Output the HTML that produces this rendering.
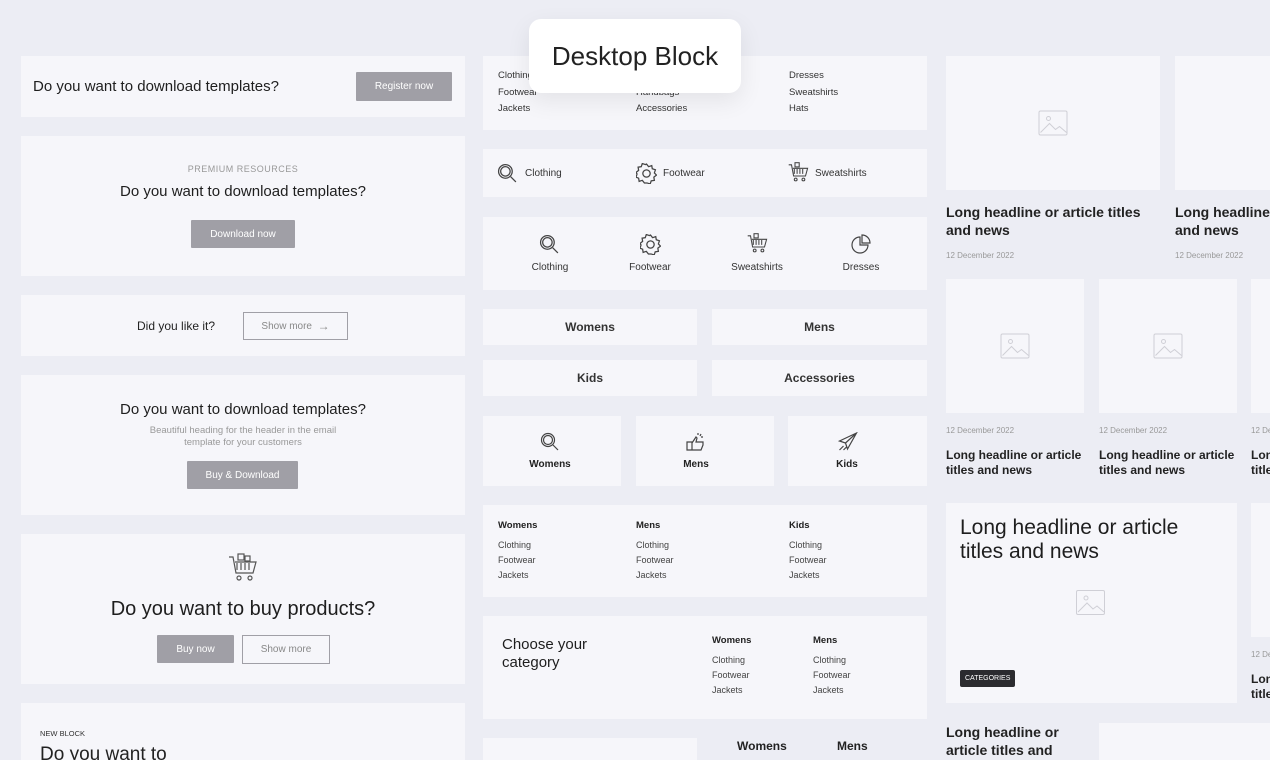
<!DOCTYPE html><html><head><style>
*{margin:0;padding:0;box-sizing:border-box}
html,body{width:1270px;height:760px;overflow:hidden}
body{background:#ecedf4;font-family:"Liberation Sans",sans-serif;color:#222}
#w{position:relative;width:1270px;height:760px;overflow:hidden}
.c{position:absolute;background:#f6f6fa}
.a{position:absolute;white-space:nowrap}
.btn{position:absolute;background:#a09fa6;color:#fff;font-size:10px;display:flex;align-items:center;justify-content:center;border-radius:1px}
.ob{position:absolute;border:1px solid #a09fa6;color:#888;font-size:10px;display:flex;align-items:center;justify-content:center;background:#f6f6fa}
.s{font-size:9.5px;color:#333;line-height:16.5px}
.s2{font-size:9px;color:#444;line-height:15px}
.b{font-weight:bold;font-size:10px}
.t{font-size:11px;color:#333}
.img svg{position:absolute;left:50%;top:50%;transform:translate(-50%,-50%)}
.h{font-size:14px;font-weight:bold;color:#222;line-height:18px}
.d{font-size:8px;color:#999}
.h2{font-size:12px;font-weight:bold;line-height:15px;color:#222}
.m{font-weight:500;color:#1e1e1e}
</style></head><body><div id="w">
<!-- left column -->
<div class="c" style="left:21px;top:56px;width:444px;height:61px"></div>
<div class="a m" style="left:33px;top:78px;font-size:15px">Do you want to download templates?</div>
<div class="btn" style="left:356px;top:72px;width:96px;height:29px">Register now</div>

<div class="c" style="left:21px;top:136px;width:444px;height:140px"></div>
<div class="a" style="left:21px;width:444px;text-align:center;top:164px;font-size:9px;color:#999;letter-spacing:.5px">PREMIUM RESOURCES</div>
<div class="a m" style="left:21px;width:444px;text-align:center;top:183px;font-size:15px">Do you want to download templates?</div>
<div class="btn" style="left:191px;top:220px;width:104px;height:28px">Download now</div>

<div class="c" style="left:21px;top:295px;width:444px;height:61px"></div>
<div class="a" style="left:137px;top:319px;font-size:12px">Did you like it?</div>
<div class="ob" style="left:243px;top:312px;width:105px;height:28px">Show more &nbsp;<span style="font-size:12px">→</span></div>

<div class="c" style="left:21px;top:375px;width:444px;height:140px"></div>
<div class="a m" style="left:21px;width:444px;text-align:center;top:401px;font-size:15px">Do you want to download templates?</div>
<div class="a" style="left:21px;width:444px;text-align:center;top:425px;font-size:9.5px;color:#999;line-height:12px;white-space:normal;padding:0 120px">Beautiful heading for the header in the email template for your customers</div>
<div class="btn" style="left:187px;top:461px;width:111px;height:28px">Buy &amp; Download</div>

<div class="c" style="left:21px;top:534px;width:444px;height:150px"></div>
<svg class="a" style="left:228px;top:553px" width="30" height="30" viewBox="0 0 30 30" fill="none" stroke="#555" stroke-width="1.2"><path d="M1 4h4l3 16h17l3-11H7M9 10v7M13 10v7M17 10v7M21 10v7"/><circle cx="11" cy="25" r="2"/><circle cx="22" cy="25" r="2"/><rect x="10" y="1" width="6" height="6"/><rect x="17" y="3" width="5" height="5"/></svg>
<div class="a m" style="left:21px;width:444px;text-align:center;top:598px;font-size:20px">Do you want to buy products?</div>
<div class="btn" style="left:157px;top:635px;width:77px;height:28px">Buy now</div>
<div class="ob" style="left:242px;top:635px;width:88px;height:29px">Show more</div>

<div class="c" style="left:21px;top:703px;width:444px;height:60px"></div>
<div class="a" style="left:40px;top:729px;font-size:7.5px;color:#333">NEW BLOCK</div>
<div class="a" style="left:40px;top:744px;font-size:19px">Do you want to</div>

<!-- middle -->
<div class="c" style="left:483px;top:56px;width:444px;height:74px"></div>
<div class="a s" style="left:498px;top:68px">Clothing<br>Footwear<br>Jackets</div>
<div class="a s" style="left:636px;top:68px">Dresses<br>Handbags<br>Accessories</div>
<div class="a s" style="left:789px;top:68px">Dresses<br>Sweatshirts<br>Hats</div>

<div class="c" style="left:483px;top:149px;width:444px;height:48px"></div>
<svg class="a" style="left:497px;top:163px" width="21" height="21" viewBox="0 0 20 20" fill="none" stroke="#444" stroke-width="1.2"><circle cx="8" cy="8" r="6.5"/><circle cx="8" cy="8" r="4.5"/><path d="M13 13l5 5"/></svg>
<div class="a t" style="left:525px;top:168px;font-size:10px">Clothing</div>
<svg class="a" style="left:636px;top:163px" width="21" height="21" viewBox="0 0 20 20" fill="none" stroke="#444" stroke-width="1.2"><path d="M10 1l2 2.5 3-1 .5 3 3 1-1 3 2 2-2.5 2 .5 3-3 .5-1 3-3-1L8 19l-2-2.5-3 1-.5-3-2.5-1 1-3L0 9l2.5-2L2 4l3-.5 1-3 3 1z"/><circle cx="10" cy="10" r="3.5"/></svg>
<div class="a t" style="left:663px;top:168px;font-size:10px">Footwear</div>
<svg class="a" style="left:788px;top:162px" width="21" height="21" viewBox="0 0 30 30" fill="none" stroke="#444" stroke-width="1.5"><path d="M1 4h4l3 16h17l3-11H7M9 10v7M13 10v7M17 10v7M21 10v7"/><circle cx="11" cy="25" r="2"/><circle cx="22" cy="25" r="2"/><rect x="10" y="1" width="6" height="6"/></svg>
<div class="a t" style="left:815px;top:168px;font-size:10px">Sweatshirts</div>

<div class="c" style="left:483px;top:217px;width:444px;height:73px"></div>
<svg class="a" style="left:539px;top:234px" width="21" height="21" viewBox="0 0 20 20" fill="none" stroke="#444" stroke-width="1.2"><circle cx="8" cy="8" r="6.5"/><circle cx="8" cy="8" r="4.5"/><path d="M13 13l5 5"/></svg>
<div class="a t" style="left:500px;width:100px;text-align:center;top:262px;font-size:10px">Clothing</div>
<svg class="a" style="left:640px;top:234px" width="21" height="21" viewBox="0 0 20 20" fill="none" stroke="#444" stroke-width="1.2"><path d="M10 1l2 2.5 3-1 .5 3 3 1-1 3 2 2-2.5 2 .5 3-3 .5-1 3-3-1L8 19l-2-2.5-3 1-.5-3-2.5-1 1-3L0 9l2.5-2L2 4l3-.5 1-3 3 1z"/><circle cx="10" cy="10" r="3.5"/></svg>
<div class="a t" style="left:600px;width:100px;text-align:center;top:262px;font-size:10px">Footwear</div>
<svg class="a" style="left:747px;top:233px" width="21" height="21" viewBox="0 0 30 30" fill="none" stroke="#444" stroke-width="1.5"><path d="M1 4h4l3 16h17l3-11H7M9 10v7M13 10v7M17 10v7M21 10v7"/><circle cx="11" cy="25" r="2"/><circle cx="22" cy="25" r="2"/><rect x="10" y="1" width="6" height="6"/></svg>
<div class="a t" style="left:707px;width:100px;text-align:center;top:262px;font-size:10px">Sweatshirts</div>
<svg class="a" style="left:851px;top:234px" width="20" height="20" viewBox="0 0 20 20" fill="none" stroke="#444" stroke-width="1.2"><path d="M9 3a8 8 0 1 0 8 8H9z"/><path d="M11 1a8 8 0 0 1 8 8h-8z"/></svg>
<div class="a t" style="left:811px;width:100px;text-align:center;top:262px;font-size:10px">Dresses</div>

<div class="c" style="left:483px;top:309px;width:214px;height:36px"></div>
<div class="a" style="left:483px;width:214px;text-align:center;top:320px;font-size:12px;font-weight:bold;color:#333">Womens</div>
<div class="c" style="left:712px;top:309px;width:215px;height:36px"></div>
<div class="a" style="left:712px;width:215px;text-align:center;top:320px;font-size:12px;font-weight:bold;color:#333">Mens</div>
<div class="c" style="left:483px;top:360px;width:214px;height:36px"></div>
<div class="a" style="left:483px;width:214px;text-align:center;top:371px;font-size:12px;font-weight:bold;color:#333">Kids</div>
<div class="c" style="left:712px;top:360px;width:215px;height:36px"></div>
<div class="a" style="left:712px;width:215px;text-align:center;top:371px;font-size:12px;font-weight:bold;color:#333">Accessories</div>

<div class="c" style="left:483px;top:416px;width:138px;height:70px"></div>
<svg class="a" style="left:540px;top:432px" width="20" height="20" viewBox="0 0 20 20" fill="none" stroke="#444" stroke-width="1.2"><circle cx="8" cy="8" r="6.5"/><circle cx="8" cy="8" r="4.5"/><path d="M13 13l5 5"/></svg>
<div class="a b" style="left:483px;width:134px;text-align:center;top:459px">Womens</div>
<div class="c" style="left:636px;top:416px;width:138px;height:70px"></div>
<svg class="a" style="left:686px;top:432px" width="20" height="20" viewBox="0 0 20 20" fill="none" stroke="#444" stroke-width="1.2"><path d="M1 10h5v8H1zM6 11l4-6 1 1-1 4h7v3l-2 5H6M12 1v2M15 2l-1 2M17 5h-2"/></svg>
<div class="a b" style="left:636px;width:120px;text-align:center;top:459px">Mens</div>
<div class="c" style="left:788px;top:416px;width:139px;height:70px"></div>
<svg class="a" style="left:837px;top:432px" width="21" height="20" viewBox="0 0 20 20" fill="none" stroke="#444" stroke-width="1.2"><path d="M19 1L2 9l6 2 2 6zM19 1L8 11M6 14l-4 4M9 15l-3 3"/></svg>
<div class="a b" style="left:788px;width:118px;text-align:center;top:459px">Kids</div>

<div class="c" style="left:483px;top:505px;width:444px;height:92px"></div>
<div class="a b" style="left:498px;top:520px;font-size:9.5px">Womens</div>
<div class="a s2" style="left:498px;top:538px">Clothing<br>Footwear<br>Jackets</div>
<div class="a b" style="left:636px;top:520px;font-size:9.5px">Mens</div>
<div class="a s2" style="left:636px;top:538px">Clothing<br>Footwear<br>Jackets</div>
<div class="a b" style="left:789px;top:520px;font-size:9.5px">Kids</div>
<div class="a s2" style="left:789px;top:538px">Clothing<br>Footwear<br>Jackets</div>

<div class="c" style="left:483px;top:616px;width:444px;height:103px"></div>
<div class="a m" style="left:502px;top:636px;font-size:15px;line-height:18px">Choose your<br>category</div>
<div class="a b" style="left:712px;top:635px;font-size:9.5px">Womens</div>
<div class="a s2" style="left:712px;top:653px">Clothing<br>Footwear<br>Jackets</div>
<div class="a b" style="left:813px;top:635px;font-size:9.5px">Mens</div>
<div class="a s2" style="left:813px;top:653px">Clothing<br>Footwear<br>Jackets</div>

<div class="c" style="left:483px;top:738px;width:214px;height:22px"></div>
<div class="a" style="left:737px;top:739px;font-size:12px;font-weight:bold">Womens</div>
<div class="a" style="left:837px;top:739px;font-size:12px;font-weight:bold">Mens</div>

<!-- right -->
<svg width="0" height="0" style="position:absolute"><defs><g id="im" fill="none" stroke="#cfcfd6" stroke-width="1"><rect x="0.5" y="0.5" width="28" height="24" rx="1.5"/><circle cx="10" cy="8" r="2"/><path d="M2 22l9-9 6 6 4-3 7 6"/></g></defs></svg>
<div class="c img" style="left:946px;top:56px;width:214px;height:134px"><svg width="29" height="25"><use href="#im"/></svg></div>
<div class="c img" style="left:1175px;top:56px;width:95px;height:134px"></div>
<div class="a h" style="left:946px;top:203px">Long headline or article titles<br>and news</div>
<div class="a h" style="left:1175px;top:203px">Long headline or article titles<br>and news</div>
<div class="a d" style="left:946px;top:251px">12 December 2022</div>
<div class="a d" style="left:1175px;top:251px">12 December 2022</div>

<div class="c img" style="left:946px;top:279px;width:138px;height:134px"><svg width="29" height="25"><use href="#im"/></svg></div>
<div class="c img" style="left:1099px;top:279px;width:138px;height:134px"><svg width="29" height="25"><use href="#im"/></svg></div>
<div class="c" style="left:1251px;top:279px;width:19px;height:134px"></div>
<div class="a d" style="left:946px;top:426px">12 December 2022</div>
<div class="a d" style="left:1099px;top:426px">12 December 2022</div>
<div class="a d" style="left:1251px;top:426px">12 December 2022</div>
<div class="a h2" style="left:946px;top:448px">Long headline or article<br>titles and news</div>
<div class="a h2" style="left:1099px;top:448px">Long headline or article<br>titles and news</div>
<div class="a h2" style="left:1251px;top:448px">Long headline or article<br>titles and news</div>

<div class="c" style="left:946px;top:503px;width:291px;height:200px"></div>
<div class="a m" style="left:960px;top:516px;font-size:21px;line-height:24px">Long headline or article<br>titles and news</div>
<svg class="a" style="left:1076px;top:590px" width="29" height="25"><use href="#im"/></svg>
<div class="a" style="left:960px;top:670px;background:#2b2b2f;color:#fff;font-size:7px;padding:5px 5px;border-radius:2px">CATEGORIES</div>
<div class="c" style="left:1251px;top:503px;width:19px;height:134px"></div>
<div class="a d" style="left:1251px;top:650px">12 December 2022</div>
<div class="a h2" style="left:1251px;top:672px">Long headline or article<br>titles and news</div>

<div class="a h" style="left:946px;top:723px">Long headline or<br>article titles and</div>
<div class="c" style="left:1099px;top:723px;width:171px;height:37px"></div>

<!-- popup -->
<div class="a" style="left:529px;top:19px;width:212px;height:74px;background:#fff;border-radius:12px;box-shadow:0 8px 24px rgba(0,0,0,.08);display:flex;align-items:center;justify-content:center;font-size:26px;color:#222">Desktop Block</div>
</div></body></html>
